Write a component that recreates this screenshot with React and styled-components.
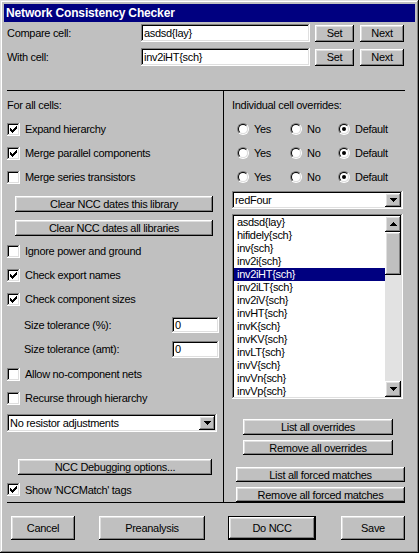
import React from 'react';
import styled, { createGlobalStyle, css } from 'styled-components';

const GlobalStyle = createGlobalStyle`
  html, body {
    margin: 0;
    padding: 0;
    background: #c0c0c0;
  }
  body {
    font-family: "Liberation Sans", Arial, sans-serif;
    font-size: 11px;
    letter-spacing: -0.3px;
    color: #000;
  }
  * {
    box-sizing: border-box;
  }
`;

const raised = css`
    box-shadow: inset -1px -1px #000, inset 1px 1px #fff, inset -2px -2px #808080, inset 2px 2px #dfdfdf;
`;

const sunken = css`
    box-shadow: inset -1px -1px #fff, inset 1px 1px #808080, inset -2px -2px #dfdfdf, inset 2px 2px #000;
`;

const Window = styled.div`
    width: 419px;
    height: 553px;
    padding: 4px;
    background: #c0c0c0;
    box-shadow: inset -1px -1px #000, inset 1px 1px #dfdfdf, inset -2px -2px #808080, inset 2px 2px #fff;
    display: flex;
    flex-direction: column;
`;

const TitleBar = styled.div`
    height: 18px;
    background: #000080;
    color: #fff;
    font-weight: bold;
    font-size: 12px;
    letter-spacing: -0.15px;
    padding-left: 2px;
    display: flex;
    align-items: center;
`;

const Content = styled.div`
    padding: 0 10px 0 3px;
    display: flex;
    flex-direction: column;
`;

const CellRow = styled.div`
    display: flex;
    align-items: center;
    height: 18px;
    margin-top: ${(p) => p.$mt}px;
`;

const CellLabel = styled.span`
    width: 134px;
`;

const TextField = styled.div`
    width: ${(p) => p.$w}px;
    height: ${(p) => p.$h || 18}px;
    background: #fff;
    padding: 0 3px;
    display: flex;
    align-items: center;
    white-space: nowrap;
    ${sunken}
`;

const Button = styled.button`
    font: inherit;
    letter-spacing: inherit;
    color: #000;
    border: 0;
    padding: 0;
    background: #c0c0c0;
    width: ${(p) => p.$w}px;
    height: ${(p) => p.$h || 16}px;
    margin-top: ${(p) => p.$mt || 0}px;
    margin-left: ${(p) => p.$ml || 0}px;
    display: flex;
    align-items: center;
    justify-content: center;
    flex-shrink: 0;
    ${(p) =>
        p.$default
            ? css`
                  box-shadow: inset 0 0 0 1px #000, inset -2px -2px #000, inset 2px 2px #fff,
                      inset -3px -3px #808080, inset 3px 3px #dfdfdf;
              `
            : raised}
`;

const Panels = styled.div`
    margin-top: 24px;
    display: grid;
    grid-template-columns: 216px 1px 1fr;
    border-top: 1px solid #000;
    border-bottom: 1px solid #000;
`;

const Divider = styled.div`
    background: #000;
`;

const Column = styled.div`
    display: flex;
    flex-direction: column;
    padding-top: 2px;
`;

const Row = styled.div`
    height: ${(p) => p.$h || 24}px;
    margin-top: ${(p) => p.$mt || 0}px;
    padding-left: ${(p) => p.$pl || 0}px;
    padding-right: ${(p) => p.$pr || 0}px;
    display: flex;
    align-items: center;
    justify-content: ${(p) => (p.$spread ? 'space-between' : 'flex-start')};
    white-space: nowrap;
`;

const CheckLabel = styled.label`
    display: flex;
    align-items: center;
    gap: 5px;
`;

const CheckBox = styled.span`
    width: 13px;
    height: 13px;
    background: #fff;
    display: block;
    ${sunken}
`;

const RadioGrid = styled.div`
    height: 24px;
    padding-left: 13px;
    display: grid;
    grid-template-columns: 53px 48px auto;
    align-items: center;
`;

const RadioLabel = styled.label`
    display: flex;
    align-items: center;
    gap: 5px;
`;

const RadioOuter = styled.span`
    width: 12px;
    height: 12px;
    border-radius: 50%;
    border: 1px solid;
    border-color: #808080 #fff #fff #808080;
    display: flex;
    align-items: center;
    justify-content: center;
`;

const RadioInner = styled.span`
    width: 10px;
    height: 10px;
    border-radius: 50%;
    border: 1px solid;
    border-color: #000 #dfdfdf #dfdfdf #000;
    background: #fff;
    display: flex;
    align-items: center;
    justify-content: center;
`;

const RadioDot = styled.span`
    width: 4px;
    height: 4px;
    border-radius: 50%;
    background: #000;
`;

const Combo = styled.div`
    width: ${(p) => p.$w}px;
    height: 18px;
    margin-top: ${(p) => p.$mt}px;
    margin-left: ${(p) => p.$ml || 0}px;
    padding: 2px;
    background: #fff;
    display: flex;
    align-items: center;
    white-space: nowrap;
    ${sunken}
`;

const ComboText = styled.span`
    flex: 1;
    padding-left: 1px;
`;

const ArrowButton = styled.span`
    width: 16px;
    height: ${(p) => p.$h || 14}px;
    background: #c0c0c0;
    display: flex;
    align-items: center;
    justify-content: center;
    flex-shrink: 0;
    ${raised}
`;

const ListBox = styled.div`
    width: 171px;
    height: 185px;
    margin: 5px 0 0 8px;
    padding: 2px;
    background: #fff;
    display: flex;
    ${sunken}
`;

const ListItems = styled.div`
    flex: 1;
    overflow: hidden;
`;

const ListItem = styled.div`
    height: 13px;
    line-height: 13px;
    padding-left: 3px;
    white-space: nowrap;
    background: ${(p) => (p.$selected ? '#000080' : 'transparent')};
    color: ${(p) => (p.$selected ? '#fff' : '#000')};
`;

const ScrollBar = styled.div`
    width: 16px;
    display: flex;
    flex-direction: column;
    background: #e2e2e2;
`;

const Thumb = styled.div`
    height: 43px;
    background: #c0c0c0;
    ${raised}
`;

const Track = styled.div`
    flex: 1;
`;

const Footer = styled.div`
    margin-top: 13px;
    display: flex;
    align-items: center;
`;

const CheckMark = () => (
    <svg width="13" height="13" shapeRendering="crispEdges" style={{ display: 'block' }}>
        {[5, 6, 7, 6, 5, 4, 3].map((y, i) => (
            <rect key={i} x={3 + i} y={y} width="1" height="3" fill="#000" />
        ))}
    </svg>
);

const Arrow = ({ up }) => (
    <svg width="7" height="4" shapeRendering="crispEdges" style={{ display: 'block' }}>
        <polygon points={up ? '3.5,0 7,4 0,4' : '0,0 7,0 3.5,4'} fill="#000" />
    </svg>
);

const Check = ({ checked, children }) => (
    <CheckLabel>
        <CheckBox>{checked && <CheckMark />}</CheckBox>
        {children}
    </CheckLabel>
);

const Radio = ({ checked, children }) => (
    <RadioLabel>
        <RadioOuter>
            <RadioInner>{checked && <RadioDot />}</RadioInner>
        </RadioOuter>
        {children}
    </RadioLabel>
);

const RadioRow = () => (
    <RadioGrid>
        <Radio>Yes</Radio>
        <Radio>No</Radio>
        <Radio checked>Default</Radio>
    </RadioGrid>
);

const cells = [
    'asdsd{lay}',
    'hifidely{sch}',
    'inv{sch}',
    'inv2i{sch}',
    'inv2iHT{sch}',
    'inv2iLT{sch}',
    'inv2iV{sch}',
    'invHT{sch}',
    'invK{sch}',
    'invKV{sch}',
    'invLT{sch}',
    'invV{sch}',
    'invVn{sch}',
    'invVp{sch}',
];

const App = () => {
    const selected = 'inv2iHT{sch}';
    return (
        <>
            <GlobalStyle />
            <Window>
                <TitleBar>Network Consistency Checker</TitleBar>
                <Content>
                    <CellRow $mt={2}>
                        <CellLabel>Compare cell:</CellLabel>
                        <TextField $w={169}>asdsd{'{'}lay{'}'}</TextField>
                        <Button $w={39} $h={17} $ml={5}>Set</Button>
                        <Button $w={44} $h={17} $ml={6}>Next</Button>
                    </CellRow>
                    <CellRow $mt={6}>
                        <CellLabel>With cell:</CellLabel>
                        <TextField $w={169}>inv2iHT{'{'}sch{'}'}</TextField>
                        <Button $w={39} $h={17} $ml={5}>Set</Button>
                        <Button $w={44} $h={17} $ml={6}>Next</Button>
                    </CellRow>

                    <Panels>
                        <Column>
                            <Row>For all cells:</Row>
                            <Row><Check checked>Expand hierarchy</Check></Row>
                            <Row><Check checked>Merge parallel components</Check></Row>
                            <Row><Check>Merge series transistors</Check></Row>
                            <Button $w={198} $mt={7} $ml={8}>Clear NCC dates this library</Button>
                            <Button $w={198} $mt={8} $ml={8}>Clear NCC dates all libraries</Button>
                            <Row $mt={3}><Check>Ignore power and ground</Check></Row>
                            <Row><Check checked>Check export names</Check></Row>
                            <Row><Check checked>Check component sizes</Check></Row>
                            <Row $mt={2} $pl={17} $pr={4} $spread>
                                Size tolerance (%):
                                <TextField $w={47} $h={16}>0</TextField>
                            </Row>
                            <Row $pl={17} $pr={4} $spread>
                                Size tolerance (amt):
                                <TextField $w={47} $h={17}>0</TextField>
                            </Row>
                            <Row $mt={1}><Check>Allow no-component nets</Check></Row>
                            <Row><Check>Recurse through hierarchy</Check></Row>
                            <Combo $w={210} $mt={4}>
                                <ComboText>No resistor adjustments</ComboText>
                                <ArrowButton><Arrow /></ArrowButton>
                            </Combo>
                            <Button $w={194} $mt={27} $ml={11}>NCC Debugging options...</Button>
                            <Row $mt={2} $h={25}><Check checked>Show 'NCCMatch' tags</Check></Row>
                        </Column>
                        <Divider />
                        <Column>
                            <Row $pl={8}>Individual cell overrides:</Row>
                            <RadioRow />
                            <RadioRow />
                            <RadioRow />
                            <Combo $w={171} $mt={2} $ml={8}>
                                <ComboText>redFour</ComboText>
                                <ArrowButton><Arrow /></ArrowButton>
                            </Combo>
                            <ListBox>
                                <ListItems>
                                    {cells.map((c) => (
                                        <ListItem key={c} $selected={c === selected}>{c}</ListItem>
                                    ))}
                                </ListItems>
                                <ScrollBar>
                                    <ArrowButton $h={16}><Arrow up /></ArrowButton>
                                    <Thumb />
                                    <Track />
                                    <ArrowButton $h={16}><Arrow /></ArrowButton>
                                </ScrollBar>
                            </ListBox>
                            <Button $w={150} $mt={20} $ml={19}>List all overrides</Button>
                            <Button $w={150} $h={15} $mt={5} $ml={19}>Remove all overrides</Button>
                            <Button $w={169} $h={15} $mt={12} $ml={12}>List all forced matches</Button>
                            <Button $w={169} $h={15} $mt={5} $ml={12}>Remove all forced matches</Button>
                        </Column>
                    </Panels>

                    <Footer>
                        <Button $w={64} $h={24} $ml={4}>Cancel</Button>
                        <Button $w={106} $h={24} $ml={24}>Preanalysis</Button>
                        <Button $w={88} $h={24} $ml={23} $default>Do NCC</Button>
                        <Button $w={64} $h={24} $ml={25}>Save</Button>
                    </Footer>
                </Content>
            </Window>
        </>
    );
};

export default App;
